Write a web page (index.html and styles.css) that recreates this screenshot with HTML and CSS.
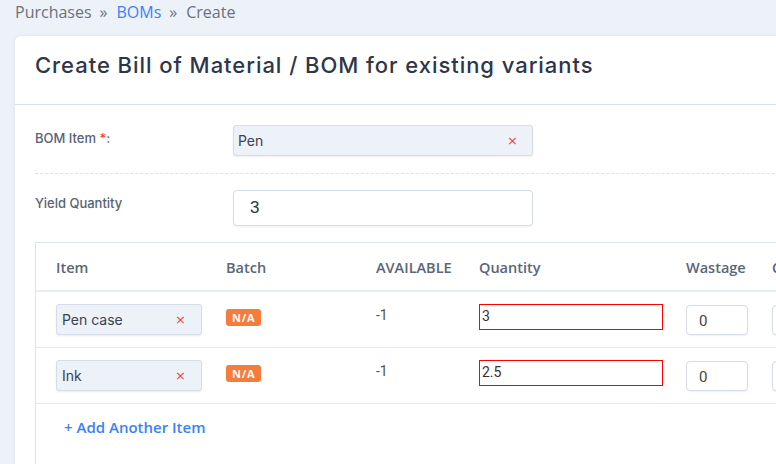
FILE: index.html
```html
<!DOCTYPE html>
<html>
<head>
<meta charset="utf-8">
<link rel="stylesheet" href="styles.css">
</head>
<body>
<div class="page">
  <nav class="crumbs">
    <span class="crumb">Purchases</span><span class="sep">»</span><a class="crumb link">BOMs</a><span class="sep">»</span><span class="crumb">Create</span>
  </nav>
  <section class="card">
    <header class="card-head">
      <h1 class="title">Create Bill of Material / BOM for existing variants</h1>
    </header>
    <div class="card-body">
      <div class="form-row">
        <label class="label">BOM Item <span class="req">*</span>:</label>
        <div class="select wide"><span class="sel-text">Pen</span><span class="clear">×</span></div>
      </div>
      <div class="divider"></div>
      <div class="form-row yield">
        <label class="label">Yield Quantity</label>
        <div class="input wide big">3</div>
      </div>
      <div class="table-box">
        <table class="items">
          <colgroup>
            <col class="c-item"><col class="c-batch"><col class="c-avail"><col class="c-qty"><col class="c-waste"><col class="c-more">
          </colgroup>
          <thead>
            <tr><th>Item</th><th>Batch</th><th>AVAILABLE</th><th>Quantity</th><th>Wastage</th><th>Cost</th></tr>
          </thead>
          <tbody>
            <tr>
              <td><div class="select small"><span class="sel-text">Pen case</span><span class="clear">×</span></div></td>
              <td><span class="badge">N/A</span></td>
              <td><span class="avail">-1</span></td>
              <td><div class="qty">3</div></td>
              <td><div class="input num">0</div></td>
              <td><div class="input num">0</div></td>
            </tr>
            <tr>
              <td><div class="select small"><span class="sel-text">Ink</span><span class="clear">×</span></div></td>
              <td><span class="badge">N/A</span></td>
              <td><span class="avail">-1</span></td>
              <td><div class="qty">2.5</div></td>
              <td><div class="input num">0</div></td>
              <td><div class="input num">0</div></td>
            </tr>
          </tbody>
        </table>
        <div class="add-row"><a class="add">+ Add Another Item</a></div>
      </div>
    </div>
  </section>
</div>
</body>
</html>
```

FILE: styles.css
```css
html, body {
  margin: 0;
  padding: 0;
  background: #edf1f8;
  overflow: hidden;
  width: 776px;
  height: 464px;
}
.page {
  padding: 0 0 0 15px;
  width: 900px;
}
.crumbs {
  font-family: "Open Sans", sans-serif;
  font-size: 16px;
  color: #6b7280;
  height: 36px;
  line-height: 24px;
  display: flex;
  align-items: flex-start;
}
.crumb { color: #6b7280; }
.crumb.link { color: #3b82f6; }
.sep { margin: 0 9px 0 8px; color: #6b7280; }
.card {
  background: #fff;
  border-radius: 6px 0 0 0;
  box-shadow: 0 0 4px rgba(120, 140, 170, 0.12);
  height: 440px;
}
.card-head {
  height: 68px;
  border-bottom: 1px solid #d9e3f0;
  padding: 0 20px;
  display: flex;
  align-items: center;
}
.title {
  margin: 0;
  font-family: "Inter", sans-serif;
  font-weight: 500;
  font-size: 22px;
  color: #2e3649;
  letter-spacing: 0.95px;
  position: relative;
  top: -5px;
}
.card-body {
  padding: 20px 0 0 20px;
}
.form-row {
  display: flex;
  align-items: flex-start;
  height: 31px;
}
.label {
  width: 198px;
  font-family: "Inter", sans-serif;
  font-size: 13px;
  font-weight: 500;
  color: #596275;
  padding-top: 5px;
}
.req { color: #ef4444; }
.select {
  display: flex;
  align-items: center;
  justify-content: space-between;
  background: #edf1f8;
  border: 1px solid #d6dde8;
  border-radius: 3px;
  box-shadow: 0 1px 2px rgba(0, 0, 0, 0.08);
  box-sizing: border-box;
  font-family: "Inter", sans-serif;
  color: #3b4252;
}
.select.wide {
  width: 300px;
  height: 31px;
  padding: 0 14px 0 4px;
  font-size: 14px;
}
.sel-text { padding-bottom: 1px; }
.clear {
  color: #ef4444;
  font-family: "DejaVu Sans", sans-serif;
  font-size: 13px;
}
.divider {
  border-top: 1px dashed #dbe2ec;
  margin: 17px 0 16px 0;
}
.form-row.yield { height: 36px; }
.input {
  background: #fff;
  border: 1px solid #d6dde8;
  border-radius: 4px;
  box-shadow: 0 1px 2px rgba(0, 0, 0, 0.06);
  box-sizing: border-box;
  font-family: "Liberation Sans", sans-serif;
  color: #333;
}
.input.wide.big {
  width: 300px;
  height: 36px;
  padding: 7px 16px;
  font-size: 17px;
}
.table-box {
  margin-top: 16px;
  border: 1px solid #dde5f0;
  border-right: none;
  height: 240px;
}
.items {
  border-collapse: collapse;
  table-layout: fixed;
  width: 840px;
}
.c-item { width: 170px; }
.c-batch { width: 150px; }
.c-avail { width: 103px; }
.c-qty { width: 207px; }
.c-waste { width: 86px; }
.c-more { width: 124px; }
.items th {
  font-family: "Open Sans", sans-serif;
  font-weight: 600;
  font-size: 14.5px;
  color: #5b6678;
  text-align: left;
  height: 45px;
  padding: 2px 0 0 20px;
  border-bottom: 2px solid #e8eef6;
}
.items td {
  height: 55px;
  padding: 0 0 0 20px;
  border-bottom: 1px solid #e4eaf2;
  vertical-align: middle;
}
.select.small {
  width: 146px;
  height: 31px;
  padding: 0 15px 0 5px;
  font-size: 14px;
}
.badge {
  display: inline-block;
  background: #f47c3c;
  color: #fff;
  font-family: "Open Sans", sans-serif;
  font-weight: 700;
  font-size: 11px;
  letter-spacing: 0.8px;
  line-height: 17px;
  padding: 0 6px;
  border-radius: 3px;
  position: relative;
  top: -3px;
}
.avail {
  font-family: "Roboto", sans-serif;
  font-size: 14px;
  color: #555;
  position: relative;
  top: -5px;
}
.qty {
  width: 184px;
  height: 26px;
  box-sizing: border-box;
  border: 1px solid #ff0000;
  font-family: "Roboto", sans-serif;
  font-size: 14px;
  color: #333;
  padding: 3px 2px;
  position: relative;
  top: -3px;
}
.input.num {
  width: 62px;
  height: 30px;
  padding: 6px 12px;
  font-size: 15px;
  font-family: "Roboto", sans-serif;
  color: #444;
}
.add-row {
  padding: 13px 0 0 28px;
}
.add {
  font-family: "Open Sans", sans-serif;
  font-weight: 600;
  font-size: 15px;
  color: #3b82f6;
}
```
